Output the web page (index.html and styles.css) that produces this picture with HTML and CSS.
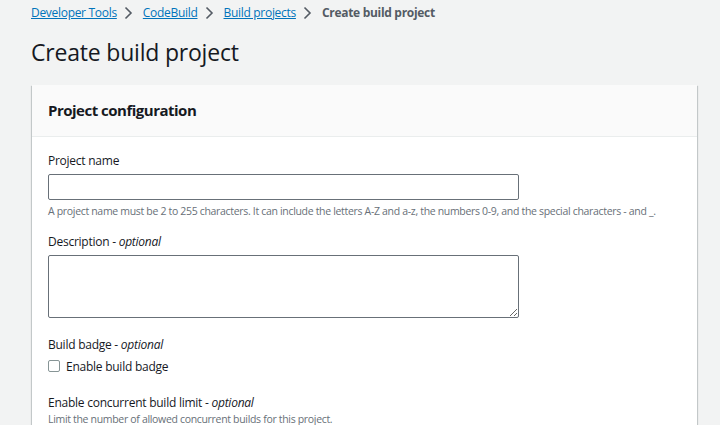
FILE: index.html
```html
<!DOCTYPE html>
<html lang="en">
<head>
<meta charset="utf-8">
<title>Create build project</title>
<link rel="stylesheet" href="styles.css">
</head>
<body>
<div class="page">
  <nav class="crumbs">
    <a class="crumb-link" href="#">Developer Tools</a>
    <svg class="chev" width="16" height="16" viewBox="0 0 16 16"><path d="M5.5 2.5l5.5 5.5-5.5 5.5" fill="none" stroke="#545b64" stroke-width="1.6"/></svg>
    <a class="crumb-link" href="#">CodeBuild</a>
    <svg class="chev" width="16" height="16" viewBox="0 0 16 16"><path d="M5.5 2.5l5.5 5.5-5.5 5.5" fill="none" stroke="#545b64" stroke-width="1.6"/></svg>
    <a class="crumb-link" href="#">Build projects</a>
    <svg class="chev" width="16" height="16" viewBox="0 0 16 16"><path d="M5.5 2.5l5.5 5.5-5.5 5.5" fill="none" stroke="#545b64" stroke-width="1.6"/></svg>
    <span class="crumb-current">Create build project</span>
  </nav>
  <h1 class="title">Create build project</h1>
  <section class="card">
    <header class="card-head">Project configuration</header>
    <div class="card-body">
      <div class="field">
        <label class="label">Project name</label>
        <input class="input" type="text">
        <div class="hint">A project name must be 2 to 255 characters. It can include the letters A-Z and a-z, the numbers 0-9, and the special characters - and _.</div>
      </div>
      <div class="field field-wide">
        <label class="label">Description - <i>optional</i></label>
        <textarea class="textarea"></textarea>
      </div>
      <div class="field field-wide">
        <label class="label">Build badge - <i>optional</i></label>
        <div class="check-row"><span class="checkbox"></span><span class="check-text">Enable build badge</span></div>
      </div>
      <div class="field">
        <label class="label">Enable concurrent build limit - <i>optional</i></label>
        <div class="hint hint-tight">Limit the number of allowed concurrent builds for this project.</div>
      </div>
    </div>
  </section>
</div>
</body>
</html>
```
FILE: styles.css
```css
* { box-sizing: border-box; }
html, body { margin: 0; padding: 0; }
body {
  background: #f2f3f3;
  font-family: "Open Sans", "Noto Sans", sans-serif;
  color: #16191f;
  overflow: hidden;
  height: 425px;
}
.page { padding: 5px 23px 0 31px; }
.crumbs {
  display: flex;
  align-items: center;
  height: 16px;
  font-size: 12px;
  letter-spacing: -0.3px;
  line-height: 16px;
}
.crumb-link { color: #0073bb; text-decoration: underline; }
.chev { margin: 0 4px 0 3px; }
.crumb-link + .chev { margin-left: 3px; }
.chev + .crumb-link, .chev + .crumb-current { margin-left: 3px; }
.crumb-current { color: #545b64; font-weight: 700; }
.title {
  margin: 16px 0 0;
  font-size: 23px;
  letter-spacing: -0.2px;
  line-height: 30px;
  font-weight: 400;
  color: #16191f;
}
.card {
  margin-top: 18px;
  margin-left: 1px;
  background: #fff;
  box-shadow: 0 1px 1px 0 rgba(0,28,36,.3), 1px 1px 1px 0 rgba(0,28,36,.15), -1px 1px 1px 0 rgba(0,28,36,.15);
  height: 400px;
}
.card-head {
  background: #fafafa;
  border-bottom: 1px solid #eaeded;
  height: 52px;
  padding: 0 16px 2px;
  display: flex;
  align-items: center;
  font-size: 15px;
  letter-spacing: -0.5px;
  font-weight: 700;
}
.card-body { padding: 16px 16px 0; }
.field { margin-bottom: 16px; }
.field-wide { margin-bottom: 19px; }
.label { display: block; font-size: 12px; letter-spacing: -0.25px; line-height: 16px; }
.label i { font-style: italic; }
.input {
  display: block;
  margin-top: 5px;
  width: 471px;
  height: 26px;
  border: 1px solid #687078;
  border-radius: 2px;
  background: #fff;
}
.hint {
  margin-top: 4px;
  font-size: 10.5px;
  letter-spacing: -0.32px;
  line-height: 14px;
  color: #687078;
}
.hint-tight { margin-top: 1px; }
.textarea {
  display: block;
  margin-top: 5px;
  width: 471px;
  height: 63px;
  border: 1px solid #687078;
  border-radius: 2px;
  resize: both;
}
.check-row { display: flex; align-items: center; gap: 6px; margin-top: 3px; height: 20px; }
.checkbox {
  width: 12px;
  height: 12px;
  border: 1px solid #879596;
  border-radius: 2px;
  background: #fff;
}
.check-text { font-size: 12px; letter-spacing: -0.25px; }
```
